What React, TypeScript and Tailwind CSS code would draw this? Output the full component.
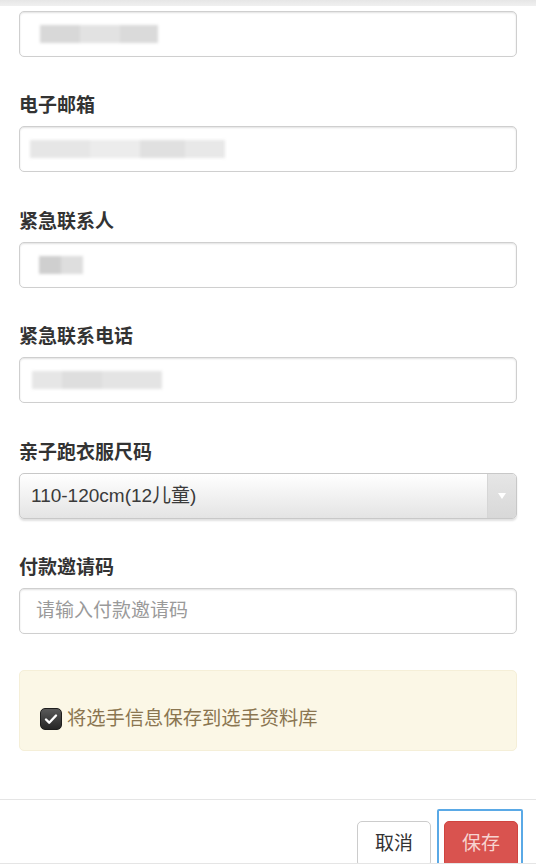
import React from 'react';

const fontStack = "font-['Liberation_Sans','Noto_Sans_CJK_SC',sans-serif]";

function Redacted({ blocks }: { blocks: { w: number; shade: string }[] }) {
  return (
    <div className="flex items-center h-[20px] blur-[1.5px]">
      {blocks.map((b, i) => (
        <span key={i} className={`h-[18px] ${b.shade}`} style={{ width: b.w }} />
      ))}
    </div>
  );
}

function FakeInput({ children, pl = 'pl-[20px]' }: { children?: React.ReactNode; pl?: string }) {
  return (
    <div
      className={`h-[46px] w-full flex items-center ${pl} bg-white border border-[#cfcfcf] rounded-[5px] shadow-[inset_0_1px_2px_rgba(0,0,0,0.12)]`}
    >
      {children}
    </div>
  );
}

function Label({ text, mt }: { text: string; mt: string }) {
  return (
    <div className={`${mt} mb-[5px] h-[30px] leading-[30px] text-[19px] font-bold text-[#333]`}>{text}</div>
  );
}

export default function App() {
  return (
    <div className={`w-[536px] h-[866px] overflow-hidden bg-white ${fontStack}`}>
      {/* edge of the header above */}
      <div className="h-[6px] bg-gradient-to-b from-[#e6e6e6] to-[#f0f0f0]" />

      <div className="px-[19px] pt-[5px]">
        <FakeInput>
          <Redacted
            blocks={[
              { w: 40, shade: 'bg-[#d8d8d8]' },
              { w: 40, shade: 'bg-[#e2e2e2]' },
              { w: 38, shade: 'bg-[#dadada]' },
            ]}
          />
        </FakeInput>

        <Label text="电子邮箱" mt="mt-[34px]" />
        <FakeInput pl="pl-[10px]">
          <Redacted
            blocks={[
              { w: 60, shade: 'bg-[#e6e6e6]' },
              { w: 50, shade: 'bg-[#ececec]' },
              { w: 45, shade: 'bg-[#e0e0e0]' },
              { w: 40, shade: 'bg-[#e8e8e8]' },
            ]}
          />
        </FakeInput>

        <Label text="紧急联系人" mt="mt-[35px]" />
        <FakeInput pl="pl-[19px]">
          <Redacted
            blocks={[
              { w: 22, shade: 'bg-[#cfcfcf]' },
              { w: 22, shade: 'bg-[#dedede]' },
            ]}
          />
        </FakeInput>

        <Label text="紧急联系电话" mt="mt-[34px]" />
        <FakeInput pl="pl-[12px]">
          <Redacted
            blocks={[
              { w: 30, shade: 'bg-[#e6e6e6]' },
              { w: 40, shade: 'bg-[#dedede]' },
              { w: 60, shade: 'bg-[#e4e4e4]' },
            ]}
          />
        </FakeInput>

        <Label text="亲子跑衣服尺码" mt="mt-[35px]" />
        <div className="h-[46px] w-full flex rounded-[5px] border border-[#c8c8c8] bg-gradient-to-b from-white to-[#e4e4e4] shadow-[0_2px_2px_rgba(0,0,0,0.12)] overflow-hidden">
          <div className="flex-1 flex items-center pl-[11px] text-[19px] text-[#3a3a3a]">110-120cm(12儿童)</div>
          <div className="w-[29px] flex items-center justify-center border-l border-[#d6d6d6] bg-gradient-to-b from-[#e6e6e6] to-[#d8d8d8]">
            <span className="w-0 h-0 border-l-[4px] border-r-[4px] border-t-[6px] border-l-transparent border-r-transparent border-t-white" />
          </div>
        </div>

        <Label text="付款邀请码" mt="mt-[34px]" />
        <input
          readOnly
          placeholder="请输入付款邀请码"
          className="h-[46px] w-full pl-[16px] text-[19px] bg-white border border-[#cfcfcf] rounded-[5px] shadow-[inset_0_1px_2px_rgba(0,0,0,0.12)] outline-none placeholder:text-[#9a9a9a]"
        />

        {/* save to library */}
        <div className="mt-[36px] h-[81px] rounded-[5px] border border-[#f5efd8] bg-[#fbf7e6] pl-[20px] pt-[37px]">
          <div className="flex items-center h-[22px] gap-[5px]">
            <span className="w-[22px] h-[22px] rounded-[5px] bg-gradient-to-b from-[#5a5a5a] to-[#262626] border border-[#1e1e1e] flex items-center justify-center">
              <svg width="16" height="16" viewBox="0 0 16 16" fill="none">
                <path d="M3 8.5l3.2 3.2L13 4.5" stroke="white" strokeWidth="2.4" strokeLinecap="round" strokeLinejoin="round" />
              </svg>
            </span>
            <span className="text-[19.3px] text-[#8a7550]">将选手信息保存到选手资料库</span>
          </div>
        </div>
      </div>

      {/* footer */}
      <div className="mt-[48px] h-[65px] border-t border-b border-[#e5e5e5] overflow-hidden">
        <div className="flex justify-end gap-[13px] pr-[18px] pt-[21px]">
          <button className="w-[74px] h-[46px] rounded-[5px] border border-[#cccccc] bg-white text-[19px] text-[#333]">
            取消
          </button>
          <div className="relative">
            <span className="absolute -top-[12px] -left-[7px] -right-[5px] -bottom-[10px] border-2 border-[#5aa9e6] rounded-[2px]" />
            <button className="relative w-[74px] h-[46px] rounded-[5px] border border-[#d0443f] bg-[#d9534f] text-[19px] text-[#f7d4d1]">
              保存
            </button>
          </div>
        </div>
      </div>
    </div>
  );
}
